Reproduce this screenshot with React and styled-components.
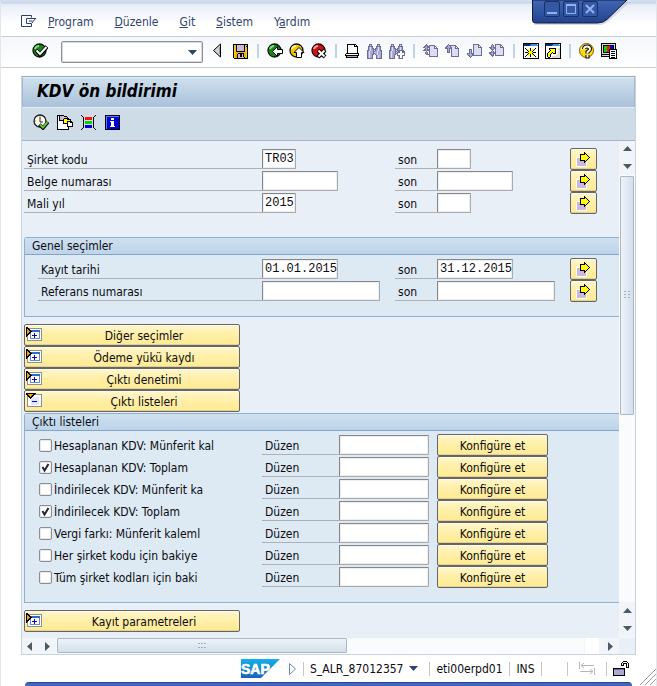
import React from "react";
import styled, { createGlobalStyle } from "styled-components";

const GlobalStyle = createGlobalStyle`
  * {
    box-sizing: border-box;
  }
  body {
    margin: 0;
    background-color: white;
  }
  body, input, button {
    font-family: "DejaVu Sans Condensed", "DejaVu Sans", sans-serif;
    font-size: 12px;
    line-height: 16px;
    color: #0b0b12;
  }
  button {
    padding: 0;
    border: none;
    background: none;
  }
  svg {
    display: block;
    flex: none;
  }
`;

const Window = styled.div`
  position: relative;
  display: flex;
  flex-direction: column;
  min-height: 100vh;
  border-top: 2px solid #d3deef;
  border-left: 1px solid #e4e7ea;
  border-right: 1px solid #e4e7ea;
  background: linear-gradient(to bottom, #c3d0e8 0, #e9eef7 3px, #ffffff 22px);
`;

const Controls = styled.div`
  position: absolute;
  top: -2px;
  right: 26px;
  width: 98px;
  height: 26px;
`;

const ControlsShape = styled.svg`
  position: absolute;
  top: 0;
  left: 0;
`;

const ControlRow = styled.div`
  position: relative;
  display: flex;
  gap: 3px;
  padding: 1px 0 0 12px;
`;

const ControlButton = styled.button`
  width: 16px;
  height: 16px;
  border: 1px solid #16306c;
  border-radius: 2px;
  background-color: #3558a4;
`;

const MenuBar = styled.nav`
  display: flex;
  align-items: center;
  height: 35px;
  padding: 4px 0 0 20px;
  border-bottom: 1px solid #c9ced6;
`;

const MenuItem = styled.button`
  margin-left: ${props => (props.$first ? "11px" : "21px")};
  padding-top: 2px;
  color: #31456f;
`;

const Toolbar = styled.div`
  display: flex;
  align-items: center;
  gap: 6px;
  height: 31px;
  padding: 0 31px;
  border-bottom: 1px solid #c9ced6;
  background: linear-gradient(to bottom, #f4f7fb, #ffffff);
`;

const IconButton = styled.button`
  width: 16px;
  height: 16px;
  margin-bottom: 2px;
`;

const Separator = styled.span`
  flex: none;
  width: 2px;
  height: 14px;
  margin: 0 2px 2px;
  background-color: #bfd3e6;
`;

const Command = styled.div`
  display: flex;
  align-items: center;
  width: 142px;
  height: 22px;
  margin: 0 2px 0 7px;
  border: 1px solid #8f9398;
  border-radius: 2px;
  background-color: white;
  box-shadow: inset 0 0 0 1px #d5d8dc;
  input {
    flex: 1;
    min-width: 0;
    height: 18px;
    margin-left: 2px;
    border: none;
    outline: none;
    background: none;
  }
  button {
    width: 18px;
    height: 18px;
    padding-left: 4px;
  }
`;

const Panel = styled.main`
  display: flex;
  flex: 1;
  flex-direction: column;
  margin: 8px 20px 0;
  border: 1px solid #c7d3e2;
  border-top-color: #93a9bf;
  background-color: #e8eff6;
`;

const Title = styled.h1`
  height: 31px;
  margin: 0;
  padding: 0 14px;
  border: 1px solid #a3b8cc;
  border-bottom-color: #e6eff6;
  border-top-color: #e3edf5;
  font-size: 17px;
  font-style: italic;
  font-weight: bold;
  line-height: 26px;
  color: black;
  background: linear-gradient(to bottom, #cfe0ed, #a9c1da);
`;

const Actions = styled.div`
  display: flex;
  gap: 8px;
  height: 33px;
  padding: 6px 11px;
  border-bottom: 1px solid #a3b5c8;
  background-color: #cddce7;
`;

const Body = styled.div`
  display: flex;
  flex: 1;
`;

const Form = styled.form`
  flex: 1;
  min-width: 0;
  overflow: hidden;
  padding: 7px 0 5px 2px;
`;

const Row = styled.div`
  display: grid;
  grid-template-columns: ${props => (props.$inGroup ? "224px" : "238px")} 133px 42px 133px 27px;
  align-items: center;
  height: 22px;
`;

const OutputRow = styled.div`
  display: grid;
  grid-template-columns: 224px 77px 98px 111px;
  align-items: center;
  height: 22px;
`;

const Label = styled.label`
  height: 20px;
  padding-left: 3px;
  border-bottom: 1px solid #adb1b5;
  line-height: 22px;
  white-space: nowrap;
`;

const Field = styled.input`
  width: ${props => props.$width}px;
  height: 20px;
  padding: 0 0 0 2px;
  border: 1px solid #a9abae;
  border-top-color: #85878b;
  border-left-color: #85878b;
  border-radius: 1px;
  outline: none;
  font-family: "Liberation Mono", monospace;
  background-color: white;
  box-shadow: inset 0 0 0 1px #eceef0;
`;

const Group = styled.fieldset`
  min-width: 0;
  margin: ${props => props.$top}px 0 0;
  padding: 0 0 14px;
  border: 1px solid #8fb0d0;
  border-right: none;
  border-top-left-radius: 3px;
  background-color: #deeaf3;
`;

const GroupTitle = styled.legend`
  float: left;
  width: 100%;
  height: 17px;
  margin-bottom: 3px;
  padding: 0 7px;
  border-bottom: 1px solid #85a3c6;
  line-height: 16px;
  background: linear-gradient(to bottom, #cfe0ef, #bdd4ea);
`;

const GroupBody = styled.div`
  clear: both;
  padding-left: 13px;
`;

const YellowButton = styled.button`
  display: flex;
  align-items: center;
  justify-content: center;
  width: 100%;
  height: 22px;
  border: 1px solid #65666a;
  border-radius: 2px;
  background: linear-gradient(to bottom, #fff6cd, #ffefa6 50%, #ffea94);
  box-shadow: inset 0 1px 0 #fffbe6, inset 0 -1px 0 #e5d28a;
`;

const ButtonText = styled.span`
  flex: 1;
  padding-top: 2px;
  text-align: center;
`;

const Sections = styled.div`
  width: 216px;
  margin-top: 7px;
`;

const SectionButton = styled(YellowButton)`
  padding: 0 0 0 1px;
  ${ButtonText} {
    padding-left: 7px;
  }
`;

const CheckLabel = styled.label`
  display: flex;
  align-items: center;
  gap: 2px;
  padding-left: 1px;
  white-space: nowrap;
`;

const CheckText = styled.span`
  padding-top: 2px;
`;

const CheckBox = styled.span`
  position: relative;
  width: 13px;
  height: 13px;
  input {
    display: block;
    width: 13px;
    height: 13px;
    margin: 0;
    appearance: none;
    border: 1px solid #8b8d91;
    border-radius: 2px;
    background-color: white;
    box-shadow: inset 0 0 0 1px #e8eaec;
  }
  svg {
    position: absolute;
    top: 0;
    left: 0;
    visibility: hidden;
    pointer-events: none;
  }
  input:checked + svg {
    visibility: visible;
  }
`;

const VerticalBar = styled.div`
  display: flex;
  flex-direction: column;
  gap: 1px;
  width: 16px;
  padding-bottom: 2px;
  background-color: #f3f6f9;
`;

const HorizontalBar = styled.div`
  display: flex;
  gap: 1px;
  height: 16px;
  background-color: #f3f6f9;
`;

const ScrollButton = styled.button`
  display: flex;
  flex: none;
  align-items: center;
  justify-content: center;
  width: 16px;
  height: 16px;
  background-color: #f1f5fa;
`;

const Track = styled.div`
  flex: 1;
  display: flex;
  flex-direction: ${props => (props.$vertical ? "column" : "row")};
  padding: ${props => (props.$vertical ? "1px 0 0 1px" : "0 0 0 1px")};
  background-color: #fafbfd;
`;

const Thumb = styled.div`
  display: flex;
  align-items: center;
  justify-content: center;
  width: ${props => (props.$vertical ? "14px" : "55%")};
  height: ${props => (props.$vertical ? "56%" : "15px")};
  border: 1px solid #a9b7c6;
  border-radius: 1px;
  background: linear-gradient(
    ${props => (props.$vertical ? "to right" : "to bottom")},
    #eef3f8,
    #d3dfea
  );
`;

const TrackEnd = styled.span`
  width: 14px;
  margin-right: 2px;
  background-color: white;
`;

const Corner = styled.span`
  width: 16px;
  background-color: #e8eff6;
`;

const StatusBar = styled.footer`
  position: relative;
  display: flex;
  align-items: center;
  justify-content: flex-end;
  height: 27px;
  padding-right: 21px;
`;

const StatusItem = styled.span`
  display: flex;
  align-items: center;
  justify-content: ${props => (props.$start ? "flex-start" : "center")};
  height: 14px;
  min-width: ${props => props.$width || 0}px;
  padding: 0 6px;
  border-left: 1px solid ${props => (props.$plain ? "transparent" : "#c3c6ca")};
  white-space: nowrap;
  button {
    display: flex;
    align-items: center;
    gap: 6px;
  }
`;

const Grip = styled.svg`
  position: absolute;
  right: 0;
  bottom: -3px;
`;

const BottomEdge = styled.div`
  height: 4px;
  margin: 0 24px;
  border-top: 1px solid #27458f;
  border-radius: 16px 16px 0 0;
  background-color: #4068c0;
`;

const PALETTE = {
  k: "#000000",
  w: "#ffffff",
  p: "#6d6d9c",
  l: "#a9a9d4",
  v: "#dcdcf2",
  g: "#8a8a8a",
  y: "#ffff00",
  o: "#f0b400",
  d: "#8f6a00",
  b: "#0000d8",
  n: "#0a2f7a",
  s: "#3f8fdc",
  r: "#ff1010",
  e: "#00d800",
  c: "#cbb8dc",
  t: "#d9d9d9",
  x: "#f5c430"
};

// Every letter is one pixel, "." is transparent.
const PixelIcon = ({ rows }) => (
  <svg
    width={rows[0].length}
    height={rows.length}
    shapeRendering="crispEdges"
    aria-hidden="true"
  >
    {rows.map((row, y) =>
      (row.match(/(.)\1*/g) || []).map((run, i, runs) => {
        const x = runs.slice(0, i).join("").length;
        return run[0] === "." ? null : (
          <rect
            key={x}
            x={x}
            y={y}
            width={run.length}
            height="1"
            fill={PALETTE[run[0]]}
          />
        );
      })
    )}
  </svg>
);

const SAVE = [
  "kkkkkkkkkkkkkkk.",
  "kxxkccccccckxxk.",
  "kxxkccccccckxkk.",
  "kxxkccccccckxxk.",
  "kxxkccccccckxxk.",
  "kxxkccccccckxxk.",
  "kxxkccccccckxxk.",
  "kxxkkkkkkkkkxxk.",
  "kxxooooooooooxk.",
  "kxoookkkkkkooxk.",
  "kxookcckkckooxk.",
  "kxookcckkckooxk.",
  "kxookcckkckooxk.",
  "kxookcccccckoxk.",
  ".kkkkkkkkkkkkkk."
];

const PRINT = [
  "..kkkkkkkkk.....",
  "..kwwwwwwkwk....",
  "..kwwwwwwkkkk...",
  "..kwwwwwwwwwk...",
  "..kwwwwwwwwwk...",
  "..kwwwwwwwwwk...",
  "..kwwwwwwwwwk...",
  "..kwwwwwwwwwk...",
  "..kwwwwwwwwwk...",
  ".kkkkkkkkkkkkk..",
  "kwwwwwwwwwwwwk..",
  "kkkkkkkkkkkkkk..",
  ".kllllllllllk...",
  ".kkkkkkkkkkkk...",
  "................"
];

const FIND = [
  "..ppp.....ppp...",
  "..pvp.....pvp...",
  ".ppppp...ppppp..",
  ".plvlp...plvlp..",
  ".plvlpp.pplvlp..",
  ".plvllpppllvlp..",
  "pplvllpvpllvlpp.",
  "plvlllppllvlllp.",
  "plvlllpvllvlllp.",
  "plvlllppllvlllp.",
  "plvllpp.plvlllp.",
  "plvllp...plvllp.",
  "plvllp...plvllp.",
  "plvllp...plvllp.",
  "pppppp...pppppp."
];

const FIND_NEXT = [
  "..ppp.....ppp...",
  "..pvp.....pvp...",
  ".ppppp...ppppp..",
  ".plvlp...plvlp..",
  ".plvlpp.pplvlp..",
  ".plvllpppllvlp..",
  "pplvllpvppppppp.",
  "plvlllpplppwwppp",
  "plvlllpvpppwwppp",
  "plvlllpppwwwwwwp",
  "plvllpp.pwwwwwwp",
  "plvllp..pppwwppp",
  "plvllp...lpwwp..",
  "plvllp...lpwwp..",
  "pppppp...lpppp.."
];

const FIRST_PAGE = [
  "...p............",
  "..ppp.pppppp....",
  ".pplpppvvvvpp...",
  "ppllpppvvvvpwp..",
  "..plp.pvvvvpppp.",
  ".pplpppvvvvvvvp.",
  "ppplpppvvvvvvvp.",
  "...p..pvvvvvvvp.",
  "..plp.pvvvvvvvp.",
  "..plp.pvvvvvvvp.",
  "...ppppvvvvvvvp.",
  "......pvvvvvvvp.",
  "......ppppppppp.",
  "................"
];

const PREV_PAGE = [
  "...p............",
  "..plppppppp.....",
  ".ppllpvvvvpp....",
  "pplllppvvvpwp...",
  "ppplpppvvvpppp..",
  "..plp.pvvvvvvp..",
  "..plp.pvvvvvvp..",
  "..plp.pvvvvvvp..",
  "..ppp.pvvvvvvp..",
  "......pvvvvvvp..",
  "......pvvvvvvp..",
  "......pvvvvvvp..",
  "......pppppppp..",
  "................"
];

const NEXT_PAGE = [
  "......pppppp....",
  "......pvvvvpp...",
  "......pvvvvpwp..",
  "......pvvvvpppp.",
  "......pvvvvvvvp.",
  "..ppp.pvvvvvvvp.",
  "..plp.pvvvvvvvp.",
  "..plp.pvvvvvvvp.",
  "..plp.pvvvvvvvp.",
  "ppplpppvvvvvvvp.",
  "pllllppvvvvvvvp.",
  ".ppllpppppppppp.",
  "..plp...........",
  "...p............"
];

const LAST_PAGE = [
  "...p..pppppp....",
  "..plp.pvvvvpp...",
  "..plp.pvvvvpwp..",
  "ppplpppvvvvpppp.",
  ".ppllppvvvvvvvp.",
  "..ppp.pvvvvvvvp.",
  "...p..pvvvvvvvp.",
  "..plp.pvvvvvvvp.",
  "ppplpppvvvvvvvp.",
  "ppllpppvvvvvvvp.",
  ".pplp.pvvvvvvvp.",
  "..ppp.ppppppppp.",
  "...p............",
  "................"
];

const NEW_SESSION = [
  "kkkkkkkkkkkkkkkk",
  "knnnnnnnsssssswk",
  "knnnnnnssssssssk",
  "kwwwwwwwwwwwwwwk",
  "kwwwwwwwwwwwwwwk",
  "kwkwwwwkwwwwkwwk",
  "kwwkyywkwyykwwwk",
  "kwwwkyykyykwwwwk",
  "kwwwwkyyykwwwwwk",
  "kwkkkyyyyykkkwwk",
  "kwwwwkyyykwwwwwk",
  "kwwwkyykyykwwwwk",
  "kwwkyywkwyykwwwk",
  "kwkwwwwkwwwwkwwk",
  "kwwwwwwwwwwwwwwk",
  "kkkkkkkkkkkkkkkk"
];

const SHORTCUT = [
  "kkkkkkkkkkkkkkkk",
  "knnnnnnnsssssswk",
  "knnnnnnssssssssk",
  "kwwwwwwwwwwwwwwk",
  "kwwwwwwwwwwwwwwk",
  "kwwwkkkkkkkwwttk",
  "kwwwkyyyyykwwttk",
  "kwwwwkyyyykwwttk",
  "kwwwkyyyyykwwttk",
  "kwwkyyykyykwwttk",
  "kwkyyykwkkkwwttk",
  "kwkyykwwwwwwtttk",
  "kwkyykwwwwwttttk",
  "kwkyykwttttttttk",
  "kwwkkwwttttttttk",
  "kkkkkkkkkkkkkkkk"
];

const LAYOUT = [
  "kkkkkkkkkkkkkkk.",
  "ktttttttttttttk.",
  "ktkkkkkkkkkkktk.",
  "ktkeeerrrbbbktk.",
  "ktkeeerrrbbbktk.",
  "ktkeeerrrbbbktk.",
  "ktkeeerrkkkkkkkk",
  "ktkeeerrkwwwwwwk",
  "ktkeeerrkwkkkkwk",
  "ktkkkkkkkwwwwwwk",
  "ktttttttkwkkkkwk",
  "kkkkkkkkkwwwwwwk",
  "ktttttttkwkkkkwk",
  "kkkkkkkkkwwwwwwk",
  "........kwkkkkwk",
  "........kkkkkkkk"
];

const VARIANT = [
  "kkkkkkk.........",
  "kwkcccckkk......",
  "kwkccccccck.....",
  "kwkcccckkkkk....",
  "kwkccckyyykkkk..",
  "kwkkkkkyyyyyyk..",
  "kwwwwwkyyykkkkk.",
  "kwwwwwkyyykwwkkk",
  "kwwwwwkkkkkwwwwk",
  "kwwwwwwwwwkwwwwk",
  "kwwwwwwwwwkwwwwk",
  "kwwwwwwwwwkkkkkk",
  "kwwwwwwwwwwk....",
  "kwwwwwwwwwwk....",
  "kkkkkkkkkkkk...."
];

const STATUS = [
  "k.............k.",
  ".k...........k..",
  "..k.rrrrrrr.k...",
  "..k.rrrrrrr.k...",
  "..k.rrrrrrr.k...",
  "..k.........k...",
  "..k.eeeeeee.k...",
  "..k.eeeeeee.k...",
  "..k.eeeeeee.k...",
  "..k.........k...",
  "..k.bbbbbbb.k...",
  "..k.bbbbbbb.k...",
  "..k.bbbbbbb.k...",
  ".k...........k..",
  "k.............k."
];

const INFO = [
  "kkkkkkkkkkkkkkk.",
  "ksssssssssssssk.",
  "ksbbbbbbbbbbbbk.",
  "ksbbbbwwwbbbbbk.",
  "ksbbbbwwwbbbbbk.",
  "ksbbbbbbbbbbbbk.",
  "ksbbbwwwwbbbbbk.",
  "ksbbbbwwwbbbbbk.",
  "ksbbbbwwwbbbbbk.",
  "ksbbbbwwwbbbbbk.",
  "ksbbbbwwwbbbbbk.",
  "ksbbbwwwwwbbbbk.",
  "ksbbbbbbbbbbbbk.",
  "ksbbbbbbbbbbbbk.",
  "kkkkkkkkkkkkkkk."
];

const MULTIPLE = [
  "........k......",
  "........kk.....",
  "....kkkkkyk....",
  "....kyyyyyyk...",
  "....kyyyyyyyk..",
  "wwwwkyyyyyyyyk.",
  "wccckyyyyyyyk..",
  "wccckyyyyyyk...",
  "wccckkkkkyk....",
  "wccccccckkw....",
  "wccccccckcw....",
  "wcccccccccw....",
  "wcccccccccw....",
  "wcccccccccw....",
  "wwwwwwwwwww...."
];

const LOCK = [
  "..........kkkk..",
  ".........kwwwwk.",
  "........kwkkkkwk",
  "........kwk..kwk",
  "........kkk..kwk",
  ".............kwk",
  ".............kkk",
  "kkkkkkkkkkkk....",
  "kppppppppppk....",
  "kllllllllllk....",
  "kllllllllllk....",
  "kllllllllllk....",
  "kllllllllllk....",
  "kllllllllllk....",
  "kkkkkkkkkkkk...."
];

const Ball = ({ color, shine, children }) => (
  <svg width="16" height="16" aria-hidden="true">
    <circle cx="7.5" cy="7.5" r="6.5" fill={color} stroke="#101010" strokeWidth="1.3" />
    <path d="M3 6Q4 3 7 3" fill="none" stroke={shine} strokeWidth="2" />
    {children}
  </svg>
);

const AcceptIcon = () => (
  <Ball color="#148a14" shine="#7be07b">
    <path d="M4 7l4 4.500 7-8" fill="none" stroke="black" strokeWidth="4" />
    <path d="M4.500 7.500l3.500 3.500 6.500-7" fill="none" stroke="white" strokeWidth="2" />
  </Ball>
);

const BackIcon = () => (
  <Ball color="#148a14" shine="#7be07b">
    <path d="M5.500 8.500l5-5v3h5v4h-5v3z" fill="white" stroke="black" />
  </Ball>
);

const ExitIcon = () => (
  <Ball color="#f5c800" shine="#fff59a">
    <path d="M10 4.500l5 5h-2.500v5h-5v-5h-2.500z" fill="white" stroke="black" />
  </Ball>
);

const CancelIcon = () => (
  <Ball color="#dc0f0f" shine="#ff9a9a">
    <path d="M7 7l7 7M14 7l-7 7" stroke="black" strokeWidth="4" />
    <path d="M7.500 7.500l6 6M13.500 7.500l-6 6" stroke="white" strokeWidth="2" />
  </Ball>
);

const HelpIcon = () => (
  <svg width="16" height="16" fill="none" aria-hidden="true">
    <circle cx="7.500" cy="7.500" r="7" fill="#ffd800" stroke="#8a5a00" />
    <path d="M2.500 7Q3 3 7 2.500" stroke="#fffbd0" strokeWidth="2" />
    <path
      d="M5 6Q5 3.500 8 3.500Q11 3.500 11 6Q11 7.500 8.500 9V10.500M8.500 12V15.500"
      stroke="black"
      strokeWidth="4"
    />
    <path
      d="M5 6Q5 3.500 8 3.500Q11 3.500 11 6Q11 7.500 8.500 9V10.500M8.500 12V14.500"
      stroke="white"
      strokeWidth="2"
    />
  </svg>
);

const ExecuteIcon = () => (
  <svg width="16" height="16" aria-hidden="true">
    <circle cx="7" cy="7" r="6" fill="#fffef0" stroke="#222" strokeWidth="1.3" />
    <path d="M7 3v5h3M7 1.500v1M1.500 7h1M12 7h1" fill="none" stroke="#222" />
    <path d="M6.500 10.500l3.500 3.500 5-6" fill="none" stroke="black" strokeWidth="3.500" />
    <path d="M7 10.500l3 3 4.500-5.500" fill="none" stroke="#5fc43a" strokeWidth="2" />
  </svg>
);

const SystemIcon = () => (
  <svg width="16" height="12" fill="none" stroke="#2b3f6b" aria-hidden="true">
    <path d="M10.500 9v2.500h-10v-11h10v2" />
    <path d="M15 3.500h-9.500v5h5l4-5M8 6h3.500" />
  </svg>
);

const HistoryIcon = () => (
  <svg width="16" height="16" aria-hidden="true">
    <path d="M9.500 1v13l-7-6.500z" fill="#d3d3d3" stroke="black" />
    <path d="M8.500 4v7" stroke="#9a9a9a" />
  </svg>
);

const Arrow = ({ direction, color = "#4a5a66" }) => {
  const paths = {
    up: "M0 6l4.500-5 4.500 5z",
    down: "M0 2h9l-4.500 5z",
    left: "M6 0v9L1 4.500z",
    right: "M2 0v9l5-4.500z"
  };
  return (
    <svg width="9" height="9" aria-hidden="true">
      <path d={paths[direction]} fill={color} />
    </svg>
  );
};

const Dots = ({ vertical }) => (
  <svg
    width={vertical ? 6 : 8}
    height={vertical ? 8 : 6}
    fill="#9fb0c2"
    shapeRendering="crispEdges"
    aria-hidden="true"
  >
    {(vertical ? [0, 4] : [0, 3, 6]).map(x =>
      (vertical ? [0, 3, 6] : [0, 4]).map(y => (
        <rect key={`${x}-${y}`} x={x} y={y} width="2" height="1" />
      ))
    )}
  </svg>
);

const ToggleIcon = ({ open }) => (
  <svg width="16" height="16" shapeRendering="crispEdges" aria-hidden="true">
    <rect x="1.500" y="1.500" width="14" height="12" fill="white" stroke="#8c8f96" />
    {open ? (
      <>
        <rect x="5" y="4" width="8" height="8" fill="#dfe8fb" />
        <path d="M6 8.500h5" stroke="#0a0ab4" />
        <path d="M0 .5h9L4.500 5z" fill="#f6a000" stroke="black" />
      </>
    ) : (
      <>
        <rect x="4.500" y="3.500" width="9" height="8" fill="white" stroke="#5a8fd8" />
        <path d="M4 4h10" stroke="#2f6cc8" strokeWidth="2" />
        <path d="M6 8.500h5M8.500 6v5" stroke="#0a0ab4" />
        <path d="M.5 0v9l4.500-4.500z" fill="#f6a000" stroke="black" />
      </>
    )}
  </svg>
);

const SapLogo = () => (
  <svg width="39" height="19" role="img" aria-label="SAP">
    <defs>
      <linearGradient id="sap" x1="0" y1="0" x2="0" y2="1">
        <stop offset="0" stopColor="#12b0ec" />
        <stop offset="1" stopColor="#1d62b8" />
      </linearGradient>
    </defs>
    <path d="M0 0h39L20 19H0z" fill="url(#sap)" />
    <text
      x="0"
      y="15"
      fill="white"
      stroke="white"
      strokeWidth="0.6"
      fontFamily="Liberation Sans, sans-serif"
      fontSize="14"
      fontWeight="bold"
    >
      SAP
    </text>
  </svg>
);

const MENU = [
  ["", "P", "rogram"],
  ["", "D", "üzenle"],
  ["", "G", "it"],
  ["", "S", "istem"],
  ["Y", "a", "rdım"]
];

const TOOLS = [
  ["Geçmiş", <HistoryIcon />],
  ["Kaydet", <PixelIcon rows={SAVE} />],
  null,
  ["Geri", <BackIcon />],
  ["Çıkış", <ExitIcon />],
  ["İptal", <CancelIcon />],
  null,
  ["Yazdır", <PixelIcon rows={PRINT} />],
  ["Bul", <PixelIcon rows={FIND} />],
  ["Sonrakini bul", <PixelIcon rows={FIND_NEXT} />],
  null,
  ["İlk sayfa", <PixelIcon rows={FIRST_PAGE} />],
  ["Önceki sayfa", <PixelIcon rows={PREV_PAGE} />],
  ["Sonraki sayfa", <PixelIcon rows={NEXT_PAGE} />],
  ["Son sayfa", <PixelIcon rows={LAST_PAGE} />],
  null,
  ["Yeni oturum", <PixelIcon rows={NEW_SESSION} />],
  ["Kısayol", <PixelIcon rows={SHORTCUT} />],
  null,
  ["Yardım", <HelpIcon />],
  ["Yerleşim", <PixelIcon rows={LAYOUT} />]
];

const OUTPUTS = [
  ["Hesaplanan KDV: Münferit kal", false],
  ["Hesaplanan KDV: Toplam", true],
  ["İndirilecek KDV: Münferit ka", false],
  ["İndirilecek KDV: Toplam", true],
  ["Vergi farkı: Münferit kaleml", false],
  ["Her şirket kodu için bakiye", false],
  ["Tüm şirket kodları için baki", false]
];

const RangeRow = ({ id, label, width, from, to, inGroup }) => (
  <Row $inGroup={inGroup}>
    <Label htmlFor={`${id}-from`}>{label}</Label>
    <Field id={`${id}-from`} $width={width} defaultValue={from} />
    <Label htmlFor={`${id}-to`}>son</Label>
    <Field id={`${id}-to`} $width={width} defaultValue={to} />
    <YellowButton type="button" aria-label={`${label}: çoklu seçim`}>
      <PixelIcon rows={MULTIPLE} />
    </YellowButton>
  </Row>
);

const Section = ({ open, children }) => (
  <SectionButton type="button" aria-expanded={!!open}>
    <ToggleIcon open={open} />
    <ButtonText>{children}</ButtonText>
  </SectionButton>
);

const ScrollArrow = ({ direction, label }) => (
  <ScrollButton type="button" aria-label={label}>
    <Arrow direction={direction} />
  </ScrollButton>
);

const App = () => {
  return (
    <Window>
      <GlobalStyle />
      <MenuBar>
        <SystemIcon />
        {MENU.map(([before, key, after], i) => (
          <MenuItem key={after} $first={i === 0}>
            {before}
            <u>{key}</u>
            {after}
          </MenuItem>
        ))}
      </MenuBar>
      <Toolbar>
        <IconButton aria-label="Devam">
          <AcceptIcon />
        </IconButton>
        <Command>
          <input aria-label="Komut" />
          <button aria-label="Komut listesi">
            <Arrow direction="down" color="#2b4474" />
          </button>
        </Command>
        {TOOLS.map((tool, i) =>
          tool ? (
            <IconButton key={i} aria-label={tool[0]}>
              {tool[1]}
            </IconButton>
          ) : (
            <Separator key={i} />
          )
        )}
      </Toolbar>
      <Panel>
        <Title>KDV ön bildirimi</Title>
        <Actions>
          <IconButton aria-label="Yürüt">
            <ExecuteIcon />
          </IconButton>
          <IconButton aria-label="Varyant al">
            <PixelIcon rows={VARIANT} />
          </IconButton>
          <IconButton aria-label="Durum">
            <PixelIcon rows={STATUS} />
          </IconButton>
          <IconButton aria-label="Bilgi">
            <PixelIcon rows={INFO} />
          </IconButton>
        </Actions>
        <Body>
          <Form>
            <RangeRow id="company" label="Şirket kodu" width={34} from="TR03" />
            <RangeRow id="document" label="Belge numarası" width={76} />
            <RangeRow id="year" label="Mali yıl" width={34} from="2015" />
            <Group $top={23}>
              <GroupTitle>Genel seçimler</GroupTitle>
              <GroupBody>
                <RangeRow
                  id="date"
                  label="Kayıt tarihi"
                  width={76}
                  from="01.01.2015"
                  to="31.12.2015"
                  inGroup
                />
                <RangeRow
                  id="reference"
                  label="Referans numarası"
                  width={118}
                  inGroup
                />
              </GroupBody>
            </Group>
            <Sections>
              <Section>Diğer seçimler</Section>
              <Section>Ödeme yükü kaydı</Section>
              <Section>Çıktı denetimi</Section>
              <Section open>Çıktı listeleri</Section>
            </Sections>
            <Group $top={1}>
              <GroupTitle>Çıktı listeleri</GroupTitle>
              <GroupBody>
                {OUTPUTS.map(([name, checked], i) => (
                  <OutputRow key={name}>
                    <CheckLabel>
                      <CheckBox>
                        <input type="checkbox" defaultChecked={checked} />
                        <svg width="13" height="13" aria-hidden="true">
                          <path
                            d="M3.500 6l2 3.500 4-6.500"
                            fill="none"
                            stroke="#26263a"
                            strokeWidth="2"
                          />
                        </svg>
                      </CheckBox>
                      <CheckText>{name}</CheckText>
                    </CheckLabel>
                    <Label htmlFor={`layout-${i}`}>Düzen</Label>
                    <Field id={`layout-${i}`} $width={90} />
                    <YellowButton type="button">
                      <ButtonText>Konfigüre et</ButtonText>
                    </YellowButton>
                  </OutputRow>
                ))}
              </GroupBody>
            </Group>
            <Sections>
              <Section>Kayıt parametreleri</Section>
            </Sections>
          </Form>
          <VerticalBar>
            <ScrollArrow direction="up" label="Yukarı" />
            <ScrollArrow direction="down" label="Aşağı" />
            <Track $vertical>
              <Thumb $vertical>
                <Dots vertical />
              </Thumb>
            </Track>
            <ScrollArrow direction="up" label="Önceki" />
            <ScrollArrow direction="down" label="Sonraki" />
          </VerticalBar>
        </Body>
        <HorizontalBar>
          <ScrollArrow direction="left" label="Sola" />
          <ScrollArrow direction="right" label="Sağa" />
          <Track>
            <Thumb>
              <Dots />
            </Thumb>
          </Track>
          <TrackEnd />
          <ScrollArrow direction="right" label="Sağa kaydır" />
          <Corner />
        </HorizontalBar>
      </Panel>
      <StatusBar>
        <SapLogo />
        <StatusItem $plain $width={23}>
          <button aria-label="Durum alanı">
            <svg width="9" height="14" aria-hidden="true">
              <path d="M1.500 1.500v11l6-5.500z" fill="white" stroke="#6c87b4" />
            </svg>
          </button>
        </StatusItem>
        <StatusItem $start $width={126}>
          <button>
            S_ALR_87012357
            <Arrow direction="down" color="#2b4474" />
          </button>
        </StatusItem>
        <StatusItem $width={80}>eti00erpd01</StatusItem>
        <StatusItem $width={32}>INS</StatusItem>
        <StatusItem $width={26} />
        <StatusItem $width={39}>
          <svg width="16" height="13" fill="none" stroke="#b4b6ba" aria-hidden="true">
            <path d="M.5 0v7M15.500 6v7M2 3.500h13M1 9.500h13M5 1l-3 2.500 3 2.500M11 7l3 2.500-3 2.500" />
          </svg>
        </StatusItem>
        <StatusItem>
          <PixelIcon rows={LOCK} />
        </StatusItem>
        <Grip width="16" height="17" stroke="#9a9da2" aria-hidden="true">
          <path d="M0 17L16 1M5 17L16 6M10 17l6-6" />
        </Grip>
      </StatusBar>
      <BottomEdge />
      <Controls>
        <ControlsShape width="98" height="26" aria-hidden="true">
          <defs>
            <linearGradient id="tab" x1="0" y1="0" x2="0" y2="1">
              <stop offset="0" stopColor="#4166b4" />
              <stop offset="1" stopColor="#23428c" />
            </linearGradient>
          </defs>
          <path d="M2 2v23h66q5 0 10-5L98 2z" fill="#b9bdc6" opacity="0.5" />
          <path
            d="M.5 0v20q0 3 3 3h62q6 0 10-4L95 0z"
            fill="url(#tab)"
            stroke="#0d1c48"
          />
        </ControlsShape>
        <ControlRow>
          <ControlButton aria-label="Simge durumuna küçült">
            <svg width="14" height="14" aria-hidden="true">
              <path d="M2 11h10" stroke="#8fb2f2" strokeWidth="2" />
            </svg>
          </ControlButton>
          <ControlButton aria-label="Ekranı kapla">
            <svg width="14" height="14" aria-hidden="true">
              <path d="M2.500 3v8.500h9V3M2 3h10" fill="none" stroke="#8fb2f2" />
              <path d="M2 3h10" stroke="#8fb2f2" strokeWidth="2" />
            </svg>
          </ControlButton>
          <ControlButton aria-label="Kapat">
            <svg width="14" height="14" aria-hidden="true">
              <path d="M3 3l8 8M11 3l-8 8" stroke="#8fb2f2" strokeWidth="2" />
            </svg>
          </ControlButton>
        </ControlRow>
      </Controls>
    </Window>
  );
};

export default App;
